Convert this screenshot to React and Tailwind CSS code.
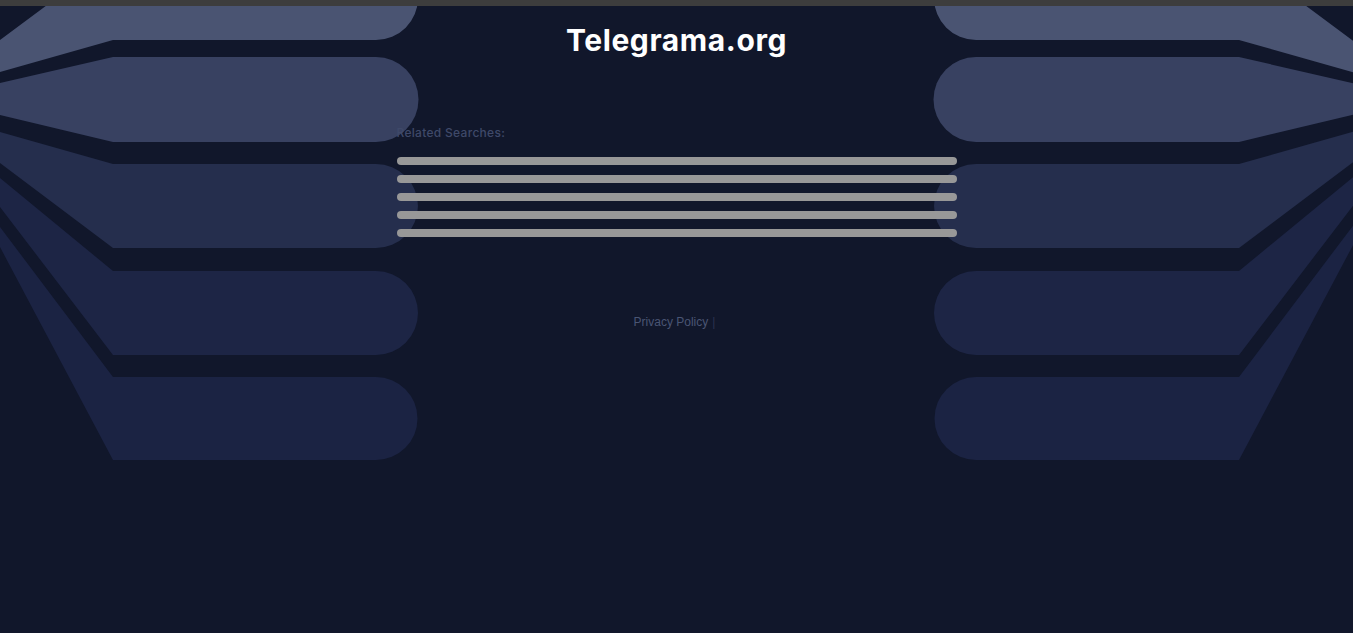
import React from "react";

const shapes = [
    { d: "M-4,43 L113,-44 H376 A42 42 0 0 1 376,40 H113 L-4,73.1 Z", fill: "#4a5472" },
    { d: "M-4,83.9 L113,57 H376 A42.5 42.5 0 0 1 376,142 H113 L-4,114 Z", fill: "#384161" },
    { d: "M-4,130.9 L113,164 H376 A42 42 0 0 1 376,248 H113 L-4,160 Z", fill: "#252e4d" },
    { d: "M-4,174.7 L113,271 H376 A42 42 0 0 1 376,355 H113 L-4,201.8 Z", fill: "#1d2545" },
    { d: "M-4,221.7 L113,377 H376 A41.5 41.5 0 0 1 376,460 H113 L-4,239.5 Z", fill: "#1b2343" },
];

function Fan({ className }) {
    return (
        <svg className={className} width="420" height="470" viewBox="0 0 420 470">
            {shapes.map((s, i) => (
                <path key={i} d={s.d} fill={s.fill} />
            ))}
        </svg>
    );
}

export default function App() {
    const searches = [0, 1, 2, 3, 4];

    return (
        <div className="relative min-h-screen overflow-hidden bg-[#11172b]">
            <div className="relative z-10 h-[6px] bg-[#3d3d3d]" />
            <Fan className="absolute top-0 left-0 overflow-visible" />
            <Fan className="absolute top-0 right-px overflow-visible -scale-x-100" />

            <div className="relative mx-auto w-[560px]">
                <h1 className="mt-4 text-center font-['Inter',sans-serif] text-[30px] leading-[36px] font-bold tracking-[0.6px] text-white">
                    Telegrama.org
                </h1>

                <div className="mt-[67px] font-['Inter',sans-serif] text-[12px] leading-4 font-medium tracking-[0.3px] text-[#3f4969]">Related Searches:</div>

                <div className="mt-4 flex flex-col gap-[10px]">
                    {searches.map((i) => (
                        <div key={i} className="h-2 rounded-full bg-[#989898]" />
                    ))}
                </div>

                <div className="mt-[77px] pr-[4px] text-center font-['Liberation_Sans',Arial,sans-serif] text-[12px] leading-4">
                    <span className="text-[#4a5574]">Privacy Policy</span>
                    <span className="ml-1 text-[#2a3250]">|</span>
                </div>
            </div>
        </div>
    );
}
